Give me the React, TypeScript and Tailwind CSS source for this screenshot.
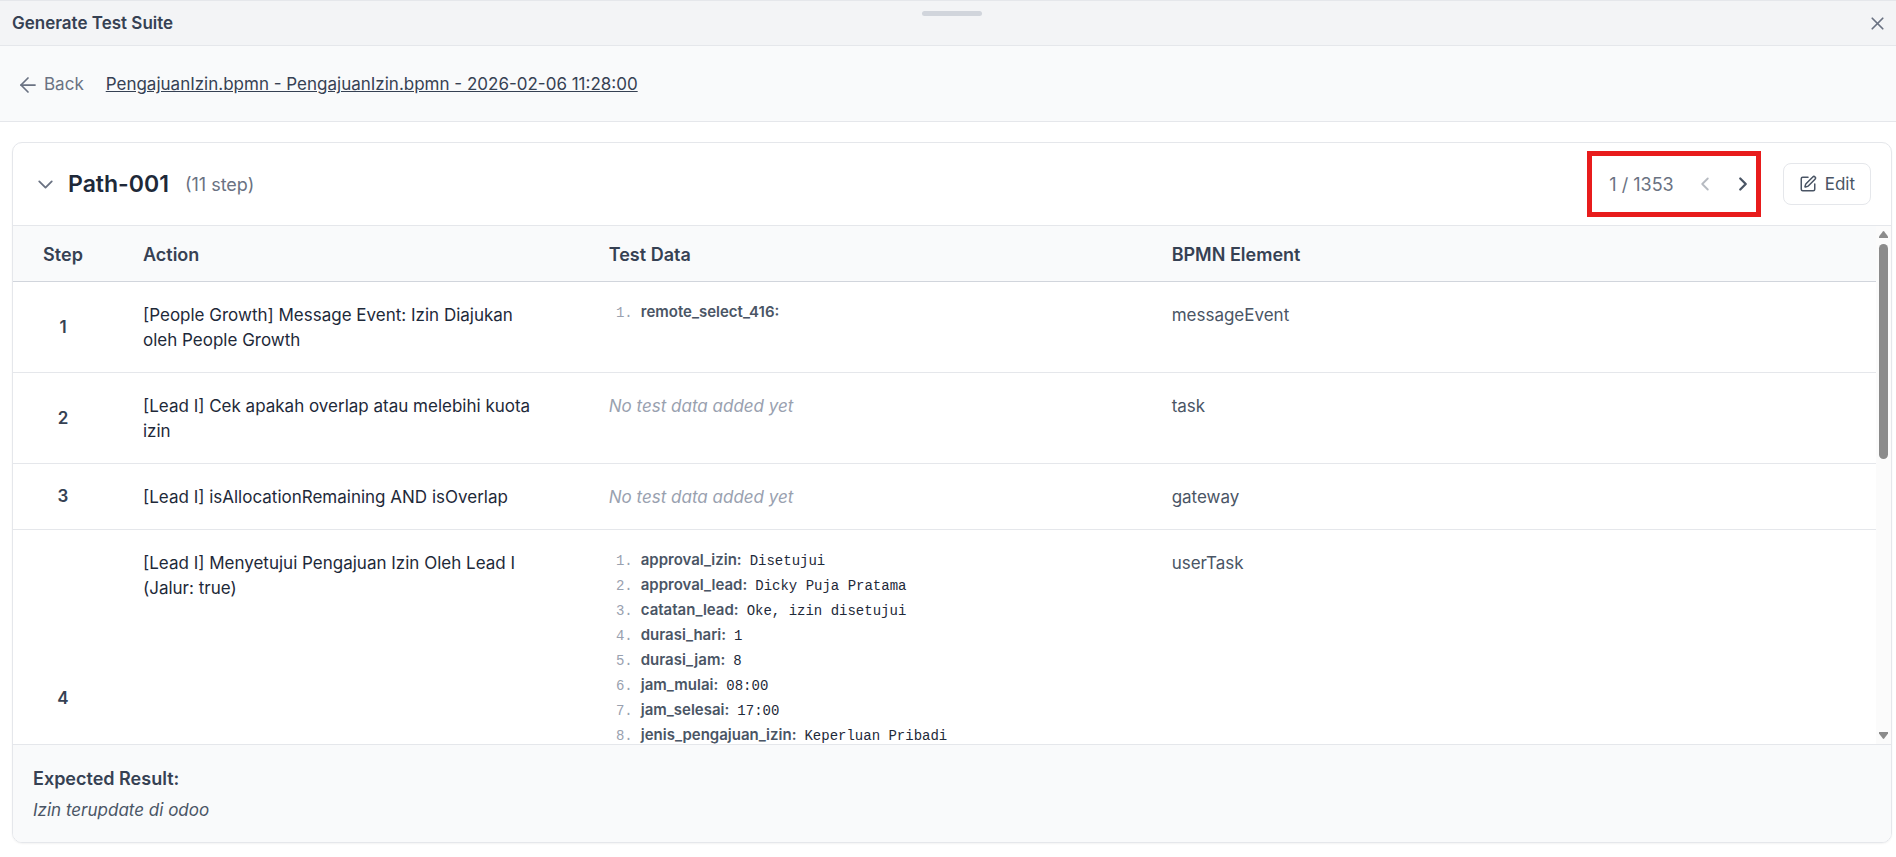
import React from 'react';
import { ArrowLeft, ChevronDown, ChevronLeft, ChevronRight, SquarePen, X } from 'lucide-react';

interface TestDatum {
    key: string;
    value?: string;
}

interface Step {
    action: string;
    element: string;
    data: TestDatum[];
}

const TOTAL_PATHS = 1353;

const steps: Step[] = [
    {
        action: '[People Growth] Message Event: Izin Diajukan oleh People Growth',
        element: 'messageEvent',
        data: [{ key: 'remote_select_416' }],
    },
    {
        action: '[Lead I] Cek apakah overlap atau melebihi kuota izin',
        element: 'task',
        data: [],
    },
    {
        action: '[Lead I] isAllocationRemaining AND isOverlap',
        element: 'gateway',
        data: [],
    },
    {
        action: '[Lead I] Menyetujui Pengajuan Izin Oleh Lead I (Jalur: true)',
        element: 'userTask',
        data: [
            { key: 'approval_izin', value: 'Disetujui' },
            { key: 'approval_lead', value: 'Dicky Puja Pratama' },
            { key: 'catatan_lead', value: 'Oke, izin disetujui' },
            { key: 'durasi_hari', value: '1' },
            { key: 'durasi_jam', value: '8' },
            { key: 'jam_mulai', value: '08:00' },
            { key: 'jam_selesai', value: '17:00' },
            { key: 'jenis_pengajuan_izin', value: 'Keperluan Pribadi' },
        ],
    },
];

function TestDataList({ data }: { data: TestDatum[] }) {
    if (data.length === 0) {
        return <span className="italic text-gray-400">No test data added yet</span>;
    }

    return (
        <ol className="text-[15px] leading-[25px]">
            {data.map((item, i) => (
                <li key={item.key} className="flex h-[25px] items-baseline">
                    <span className="w-6 shrink-0 text-right font-['Liberation_Mono',monospace] text-sm leading-[25px] text-gray-400">
                        {i + 1}.
                    </span>
                    <span className="ml-2 font-semibold text-gray-600">{item.key}:</span>
                    {item.value && (
                        <span className="ml-2 font-['Liberation_Mono',monospace] text-sm leading-[25px] text-gray-800">
                            {item.value}
                        </span>
                    )}
                </li>
            ))}
        </ol>
    );
}

function ScrollTrack() {
    return (
        <div className="flex w-[15px] shrink-0 flex-col items-center bg-[#fbfbfb] py-[5px]" aria-hidden="true">
            <svg className="h-[7px] w-[9px]" viewBox="0 0 9 7" fill="#8b8b8b">
                <path d="M3.8 .5Q4.5-.3 5.2 .5L9 5.6V7H0V5.6z" />
            </svg>
            <div className="mt-[6px] flex-1">
                <div className="h-[44%] w-[9px] rounded-full bg-[#8b8b8b]" />
            </div>
            <svg className="h-[7px] w-[9px]" viewBox="0 0 9 7" fill="#8b8b8b">
                <path d="M0 0h9v1.4L5.2 6.5Q4.5 7.3 3.8 6.5L0 1.4z" />
            </svg>
        </div>
    );
}

export default function App() {
    const [page, setPage] = React.useState(1);
    const [isOpen, setIsOpen] = React.useState(true);

    return (
        <div className="flex h-screen flex-col bg-white font-['Inter',sans-serif] text-[17px] leading-[25px] text-gray-800">
            <header className="relative flex h-[46px] shrink-0 items-center justify-between border-y border-gray-200 bg-gray-100 pr-2 pl-3">
                <h1 className="font-semibold text-gray-700">Generate Test Suite</h1>
                <div className="absolute top-[10px] left-1/2 ml-[-26px] h-[5px] w-[60px] rounded-full bg-gray-300" />
                <button type="button" aria-label="Close" className="text-gray-500">
                    <X size={21} />
                </button>
            </header>

            <nav className="flex h-[76px] shrink-0 items-center gap-[22px] border-b border-gray-200 bg-gray-50 px-4 pt-[2px]">
                <button type="button" className="flex items-center gap-1 text-gray-500">
                    <ArrowLeft size={24} strokeWidth={1.75} />
                    <span>Back</span>
                </button>
                <a href="#suite" className="text-gray-700 underline">
                    PengajuanIzin.bpmn - PengajuanIzin.bpmn - 2026-02-06 11:28:00
                </a>
            </nav>

            <main className="flex min-h-0 flex-1 flex-col pt-5 pr-1 pb-[14px] pl-3">
                <section className="flex min-h-0 flex-1 flex-col overflow-hidden rounded-[10px] border border-gray-200 shadow-xs">
                    <div className="flex h-[83px] shrink-0 items-center justify-between border-b border-gray-200 px-5">
                        <button type="button" onClick={() => setIsOpen(!isOpen)} className="flex items-center">
                            <ChevronDown size={25} strokeWidth={1.75} className="text-gray-500" />
                            <span className="ml-[10px] text-[23px] font-semibold text-gray-800">Path-001</span>
                            <span className="ml-4 text-lg leading-[25px] text-gray-500">(11 step)</span>
                        </button>
                        <div className="flex items-center gap-[22px]">
                            <div className="flex h-[66px] items-center border-[5px] border-[#e81c1c] pr-[2px] pl-[17px]">
                                <span className="text-lg leading-[25px] text-gray-500">
                                    {page} / {TOTAL_PATHS}
                                </span>
                                <button
                                    type="button"
                                    aria-label="Previous path"
                                    disabled={page === 1}
                                    onClick={() => setPage(page - 1)}
                                    className="ml-5 text-gray-600 disabled:opacity-40"
                                >
                                    <ChevronLeft size={22} />
                                </button>
                                <button
                                    type="button"
                                    aria-label="Next path"
                                    onClick={() => setPage(page + 1)}
                                    className="ml-4 text-gray-600"
                                >
                                    <ChevronRight size={22} strokeWidth={2.5} />
                                </button>
                            </div>
                            <button
                                type="button"
                                className="flex h-[42px] items-center gap-2 rounded-lg border border-gray-200 px-[15px] text-gray-600"
                            >
                                <SquarePen size={18} />
                                Edit
                            </button>
                        </div>
                    </div>

                    {isOpen && (
                        <div className="flex min-h-0 flex-1">
                            <div className="min-w-0 flex-1 overflow-y-auto [scrollbar-width:none]">
                                <table className="w-full table-fixed border-separate border-spacing-0">
                                    <thead>
                                        <tr className="h-14 bg-gray-50 text-left text-lg leading-[25px] text-gray-700 *:border-b *:border-gray-300 *:pt-[2px] *:font-semibold">
                                            <th className="w-[100px] text-center">Step</th>
                                            <th className="w-1/4 px-[30px]">Action</th>
                                            <th className="w-[30%] px-[30px]">Test Data</th>
                                            <th className="px-[34px]">BPMN Element</th>
                                        </tr>
                                    </thead>
                                    <tbody>
                                        {steps.map((step, i) => (
                                            <tr
                                                key={step.action}
                                                className="align-top last:h-[337px] *:border-b *:border-gray-200"
                                            >
                                                <td className="text-center align-middle font-semibold text-gray-700">
                                                    {i + 1}
                                                </td>
                                                <td className="px-[30px] pt-[21px] pb-[19px]">{step.action}</td>
                                                <td
                                                    className={
                                                        step.data.length
                                                            ? 'px-[30px] py-[17px]'
                                                            : 'px-[30px] pt-[21px] pb-[19px]'
                                                    }
                                                >
                                                    <TestDataList data={step.data} />
                                                </td>
                                                <td className="px-[34px] pt-[21px] pb-[19px] text-gray-600">
                                                    {step.element}
                                                </td>
                                            </tr>
                                        ))}
                                    </tbody>
                                </table>
                            </div>
                            <ScrollTrack />
                        </div>
                    )}

                    <footer className="shrink-0 border-t border-gray-200 bg-gray-50 px-5 pt-[21px] pb-[19px]">
                        <h2 className="text-lg leading-[25px] font-semibold text-gray-700">Expected Result:</h2>
                        <p className="mt-[7px] italic text-gray-600">Izin terupdate di odoo</p>
                    </footer>
                </section>
            </main>
        </div>
    );
}
